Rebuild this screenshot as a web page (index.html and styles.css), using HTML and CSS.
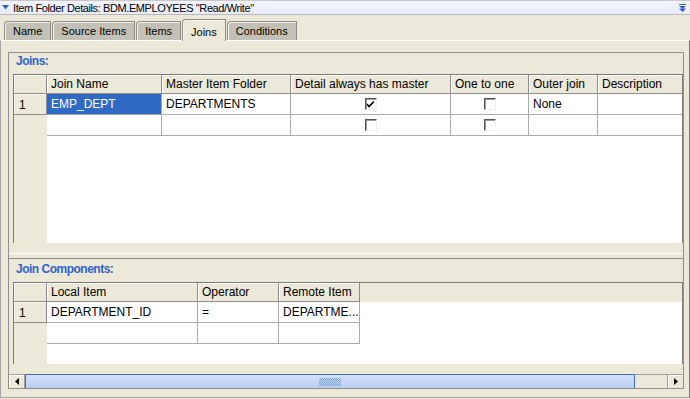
FILE: index.html
```html
<!DOCTYPE html>
<html lang="en">
<head>
  <meta charset="UTF-8" />
  <title>Item Folder Details</title>
  <link rel="stylesheet" href="styles.css">
</head>
<body>
  <div class="titlebar">
    <svg class="collapse" width="7" height="5" viewBox="0 0 7 5"><polygon points="0,0 7,0 3.5,4.5" fill="#2d5fc8"/></svg>
    <span class="title">Item Folder Details: BDM.EMPLOYEES "Read/Write"</span>
    <svg class="pin" width="7" height="8" viewBox="0 0 7 8">
      <rect x="0" y="0" width="7" height="1" fill="#2d5fc8"/>
      <polygon points="0,2 7,2 3.5,5" fill="#2d5fc8"/>
      <polygon points="0,4.5 7,4.5 3.5,8" fill="#2d5fc8"/>
    </svg>
  </div>

  <div class="tabs">
    <div class="tab">Name</div>
    <div class="tab">Source Items</div>
    <div class="tab">Items</div>
    <div class="tab active">Joins</div>
    <div class="tab">Conditions</div>
  </div>

  <div class="panel">
    <div class="box">
      <div class="pane pane-joins">
        <div class="section-label">Joins:</div>
        <div class="grid grid-joins">
          <div class="grid-head">
            <div class="hcell c-rh"></div>
            <div class="hcell c-name">Join Name</div>
            <div class="hcell c-master">Master Item Folder</div>
            <div class="hcell c-detail">Detail always has master</div>
            <div class="hcell c-one">One to one</div>
            <div class="hcell c-outer">Outer join</div>
            <div class="hcell c-desc">Description</div>
          </div>
          <div class="grid-body">
            <div class="grid-row">
              <div class="rh">1</div>
              <div class="cell c-name selected">EMP_DEPT</div>
              <div class="cell c-master">DEPARTMENTS</div>
              <div class="cell c-detail center"><span class="check checked"><svg width="9" height="9" viewBox="0 0 9 9"><polyline points="1,4 3,6.5 8,1.5" fill="none" stroke="#000" stroke-width="1.6"/></svg></span></div>
              <div class="cell c-one center"><span class="check"></span></div>
              <div class="cell c-outer">None</div>
              <div class="cell c-desc"></div>
            </div>
            <div class="grid-row">
              <div class="rh empty"></div>
              <div class="cell c-name"></div>
              <div class="cell c-master"></div>
              <div class="cell c-detail center"><span class="check"></span></div>
              <div class="cell c-one center"><span class="check"></span></div>
              <div class="cell c-outer"></div>
              <div class="cell c-desc"></div>
            </div>
          </div>
        </div>
      </div>

      <div class="splitter"></div>

      <div class="pane pane-components">
        <div class="section-label">Join Components:</div>
        <div class="grid grid-components">
          <div class="grid-head">
            <div class="hcell c-rh"></div>
            <div class="hcell c-local">Local Item</div>
            <div class="hcell c-op">Operator</div>
            <div class="hcell c-remote">Remote Item</div>
          </div>
          <div class="grid-body">
            <div class="grid-row">
              <div class="rh">1</div>
              <div class="cell c-local">DEPARTMENT_ID</div>
              <div class="cell c-op">=</div>
              <div class="cell c-remote">DEPARTME...</div>
            </div>
            <div class="grid-row">
              <div class="rh empty"></div>
              <div class="cell c-local"></div>
              <div class="cell c-op"></div>
              <div class="cell c-remote"></div>
            </div>
          </div>
        </div>

        <div class="hscroll">
          <div class="sb-btn">
            <svg width="4" height="7" viewBox="0 0 4 7"><polygon points="4,0 4,7 0,3.5" fill="#000"/></svg>
          </div>
          <div class="sb-thumb"><span class="grip"></span></div>
          <div class="sb-track"></div>
          <div class="sb-btn right">
            <svg width="4" height="7" viewBox="0 0 4 7"><polygon points="0,0 0,7 4,3.5" fill="#000"/></svg>
          </div>
        </div>
      </div>
    </div>
  </div>
</body>
</html>
```

FILE: styles.css
```css
* {
  box-sizing: border-box;
}

body {
  margin: 0;
  width: 690px;
  height: 399px;
  overflow: hidden;
  background: #ece9d8;
  font-family: "Liberation Sans", Arial, sans-serif;
  font-size: 12px;
  color: #000;
}

/* title bar */
.titlebar {
  height: 15px;
  display: flex;
  align-items: center;
  padding: 0 4px 0 2px;
  background: linear-gradient(#f2f3fd, #e9ecfb);
  border-top: 1px solid #c8c8c8;
  border-bottom: 1px solid #b9b9b9;
  font-size: 11px;
}

.title {
  letter-spacing: -0.4px;
}

.collapse {
  margin-right: 4px;
}

.pin {
  margin-left: auto;
}

/* tabs */
.tabs {
  height: 25px;
  display: flex;
  align-items: flex-end;
  padding-left: 4px;
}

.tab {
  height: 19px;
  line-height: 18px;
  padding: 0 8px;
  margin-right: 1px;
  font-size: 11px;
  background: #c3c0b5;
  border: 1px solid #8d8b84;
  border-bottom: none;
  border-top-left-radius: 4px;
  box-shadow: inset 1px 1px #f4f3ee;
}

.tab.active {
  height: 22px;
  padding-top: 3px;
  margin-bottom: -1px;
  background: #ece9d8;
  position: relative;
  z-index: 1;
}

/* main panel */
.panel {
  height: 358px;
  padding: 11px 5px 0 7px;
  border-top: 1px solid #fff;
  border-left: 1px solid #a5a5a5;
  border-right: 1px solid #7c7c7c;
  border-bottom: 1px solid #a5a5a5;
}

.box {
  height: 337px;
  display: flex;
  flex-direction: column;
  border: 1px solid #8f8f8f;
}

.pane-joins {
  height: 200px;
}

.pane-components {
  height: 129px;
  display: flex;
  flex-direction: column;
}

.splitter {
  height: 6px;
  border-top: 1px solid #fff;
  border-bottom: 1px solid #8f8f8f;
}

.section-label {
  height: 21px;
  line-height: 16px;
  padding-left: 7px;
  font-size: 12px;
  font-weight: bold;
  letter-spacing: -0.5px;
  color: #2e63c9;
}

.pane-components .section-label {
  height: 23px;
  line-height: 20px;
}

/* grids */
.grid {
  margin-left: 4px;
  display: flex;
  flex-direction: column;
  background: #ece9d8;
  border-left: 1px solid #7a7a7a;
  border-top: 1px solid #7a7a7a;
  border-right: 1px solid #808080;
}

.grid-joins {
  height: 169px;
}

.grid-components {
  height: 82px;
}

.grid-head {
  display: flex;
  height: 19px;
  flex-shrink: 0;
}

.hcell {
  height: 19px;
  line-height: 18px;
  padding-left: 4px;
  white-space: nowrap;
  overflow: hidden;
  background: #ece9d8;
  border-right: 1px solid #8c8c8c;
  border-bottom: 1px solid #8c8c8c;
  box-shadow: inset 1px 1px #fff;
}

.grid-body {
  flex: 1;
  background: linear-gradient(to right, #ece9d8 33px, #fff 33px);
}

.grid-row {
  display: flex;
  height: 21px;
}

.rh {
  width: 33px;
  flex-shrink: 0;
  line-height: 21px;
  padding-left: 5px;
  padding-top: 1px;
  background: #ece9d8;
  border-right: 1px solid #8c8c8c;
  border-bottom: 1px solid #8c8c8c;
  box-shadow: inset 1px 1px #fff;
}

.rh.empty {
  border: none;
  box-shadow: none;
}

.cell {
  line-height: 20px;
  padding-left: 4px;
  white-space: nowrap;
  overflow: hidden;
  border-right: 1px solid #acacac;
  border-bottom: 1px solid #acacac;
}

.cell.selected {
  background: #316ac5;
  color: #fff;
}

.center {
  display: flex;
  align-items: center;
  justify-content: center;
  padding-left: 0;
}

.check {
  width: 12px;
  height: 12px;
  display: flex;
  align-items: center;
  justify-content: center;
  background: #fff;
  border: 1px solid;
  border-color: #555 #f0f0f0 #f0f0f0 #555;
  box-shadow: inset 1px 1px #999;
}

.c-rh { width: 33px; flex-shrink: 0; }
.c-name { width: 115px; }
.c-master { width: 129px; }
.c-detail { width: 160px; }
.c-one { width: 78px; }
.c-outer { width: 69px; }
.c-desc { flex: 1; border-right: none; }

.c-local { width: 151px; }
.c-op { width: 81px; }
.c-remote { width: 81px; }

/* horizontal scrollbar */
.hscroll {
  margin-top: 10px;
  height: 14px;
  display: flex;
}

.sb-btn {
  width: 16px;
  display: flex;
  align-items: center;
  justify-content: center;
  background: #ece9d8;
  border-top: 1px solid #a0a0a0;
  border-right: 1px solid #a0a0a0;
  box-shadow: inset 1px 1px #fff;
}

.sb-btn.right {
  border-left: 1px solid #a0a0a0;
  border-right: none;
}

.sb-thumb {
  width: 610px;
  display: flex;
  align-items: center;
  justify-content: center;
  background: linear-gradient(#d3e1f8, #b9cff2);
  border: 1px solid #3c6fd0;
  border-bottom: none;
}

.grip {
  width: 22px;
  height: 8px;
  background: repeating-conic-gradient(#7c9fe2 0 25%, transparent 0 50%);
  background-size: 2px 2px;
}

.sb-track {
  flex: 1;
  background: #ece9d8;
  border-top: 1px solid #a0a0a0;
}
```
